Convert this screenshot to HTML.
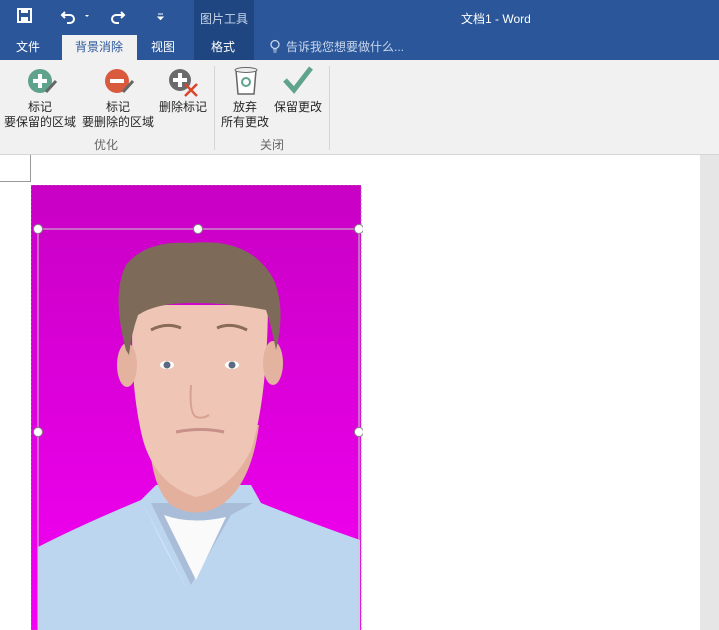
<!DOCTYPE html>
<html><head><meta charset="utf-8"><style>
body{margin:0;width:719px;height:630px;overflow:hidden;position:relative;background:#fff;font-family:"Liberation Sans","Noto Sans CJK SC",sans-serif;font-size:12px}
.abs{position:absolute}
#top{left:0;top:0;width:719px;height:60px;background:#2b579a}
#ribbon{left:0;top:60px;width:719px;height:94px;background:#f1f1f1;border-bottom:1px solid #d5d5d5}
.w{color:#fff}
.t{color:#262626;text-align:center;line-height:15px}
</style></head><body>
<div id="top" class="abs"></div>
<div class="abs" style="left:194px;top:0;width:60px;height:60px;background:#1f4680"></div>
<div class="abs" style="left:62px;top:35px;width:75px;height:25px;background:#f1f1f1"></div>
<svg class="abs" style="left:15px;top:6px" width="160" height="20">
<rect x="3" y="3" width="13" height="13" fill="none" stroke="#fff" stroke-width="2"/><rect x="6" y="3" width="7" height="4" fill="#fff"/><rect x="6" y="11" width="7" height="5" fill="#fff"/>
<path d="M50 6 L47 9 L50 12 M47 9 H55 A4 4 0 0 1 55 17 H52" fill="none" stroke="#fff" stroke-width="2"/>
<path d="M70 9 l2 2 l2 -2z" fill="#fff"/>
<path d="M106 6 L109 9 L106 12 M109 9 H101 A4 4 0 0 0 101 17 H104" fill="none" stroke="#fff" stroke-width="2"/>
<path d="M143 8 h5 M143 11 l2.5 2.5 l2.5 -2.5z" stroke="#fff" fill="#fff"/>
</svg>
<div class="abs w" style="left:200px;top:10px;font-size:12px;color:#c8d6ec">图片工具</div>
<div class="abs w" style="left:461px;top:10px;font-size:12px">文档1 - Word</div>
<div class="abs w" style="left:16px;top:38px">文件</div>
<div class="abs" style="left:75px;top:38px;color:#2b579a">背景消除</div>
<div class="abs w" style="left:151px;top:38px">视图</div>
<div class="abs w" style="left:211px;top:38px">格式</div>
<svg class="abs" style="left:269px;top:39px" width="12" height="15"><circle cx="6" cy="5.5" r="4" fill="none" stroke="#c8d6ec" stroke-width="1.3"/><path d="M4 11h4M4.5 13h3" stroke="#c8d6ec"/></svg>
<div class="abs" style="left:286px;top:38px;color:#c8d6ec">告诉我您想要做什么...</div>
<div id="ribbon" class="abs"></div>
<svg class="abs" style="left:0;top:62px" width="330" height="40">
<circle cx="40" cy="19" r="12" fill="#5fa38d"/><path d="M40 12v14M33 19h14" stroke="#fff" stroke-width="4"/><path d="M46 30 l10 -11" stroke="#666" stroke-width="3"/>
<circle cx="117" cy="19" r="12" fill="#d95a3c"/><path d="M110 19h14" stroke="#fff" stroke-width="4"/><path d="M123 30 l10 -11" stroke="#666" stroke-width="3"/>
<circle cx="180" cy="18" r="11" fill="#6b6b6b"/><path d="M180 11v14M173 18h14" stroke="#fff" stroke-width="4"/><path d="M185 22l12 12M197 22l-12 12" stroke="#d9472b" stroke-width="2.5"/>
<path d="M236 8h20l-2 24h-16z" fill="#fff" stroke="#666" stroke-width="1.5"/><ellipse cx="246" cy="8" rx="11" ry="2.5" fill="#eee" stroke="#666"/><circle cx="246" cy="20" r="4" fill="none" stroke="#5fa38d" stroke-width="2"/>
<path d="M285 18 l9 10 l17 -22" fill="none" stroke="#5fa38d" stroke-width="5"/>
</svg>
<div class="abs t" style="left:0;top:100px;width:80px">标记<br>要保留的区域</div>
<div class="abs t" style="left:80px;top:100px;width:76px">标记<br>要删除的区域</div>
<div class="abs t" style="left:157px;top:100px;width:52px">删除标记</div>
<div class="abs t" style="left:218px;top:100px;width:54px">放弃<br>所有更改</div>
<div class="abs t" style="left:272px;top:100px;width:52px">保留更改</div>
<div class="abs" style="left:94px;top:136px;color:#666">优化</div>
<div class="abs" style="left:260px;top:136px;color:#666">关闭</div>
<div class="abs" style="left:214px;top:66px;width:1px;height:84px;background:#d5d5d5"></div>
<div class="abs" style="left:329px;top:66px;width:1px;height:84px;background:#d5d5d5"></div>
<div class="abs" style="left:0;top:155px;width:30px;height:26px;border-right:1px solid #999;border-bottom:1px solid #999"></div>
<div class="abs" style="left:700px;top:155px;width:19px;height:475px;background:#e6e6e6"></div>
<svg class="abs" style="left:31px;top:185px" width="332" height="445">
<defs><linearGradient id="g" x1="0" y1="0" x2="0" y2="1"><stop offset="0" stop-color="#c800c4"/><stop offset="1" stop-color="#f400f4"/></linearGradient></defs>
<rect x="0" y="0" width="330" height="445" fill="url(#g)" stroke="#aa66aa" stroke-dasharray="2 2"/>
<path d="M7 445 V362 Q50 340 110 315 L125 300 H220 L230 318 Q280 338 329 355 V445z" fill="#bcd6f0"/>
<path d="M120 318 L160 400 L200 330 L222 318z" fill="#a9bdd8"/>
<path d="M133 330 Q160 340 195 332 L165 395z" fill="#fafafa"/>
<path d="M112 318 L160 412 L132 360z" fill="#d3e4f6"/>
<path d="M118 240 Q118 300 140 320 Q165 335 190 320 Q220 300 228 240z" fill="#e3b09e"/>
<path d="M102 120 Q98 200 112 255 Q125 300 165 312 Q200 305 220 265 Q236 215 237 120z" fill="#efc6b5"/>
<ellipse cx="96" cy="180" rx="10" ry="22" fill="#e3b3a0"/><ellipse cx="242" cy="178" rx="10" ry="22" fill="#e3b3a0"/>
<path d="M95 165 Q80 110 95 80 Q115 55 160 58 Q220 52 243 95 Q255 125 245 165 Q240 140 235 125 Q200 118 160 118 Q125 118 107 130 Q100 150 98 170z" fill="#7d6a58"/>
<path d="M120 145 Q135 137 150 143 M186 143 Q200 137 216 145" stroke="#8a6a58" stroke-width="3" fill="none"/>
<ellipse cx="136" cy="180" rx="7" ry="4" fill="#fff"/><ellipse cx="201" cy="180" rx="7" ry="4" fill="#fff"/>
<circle cx="136" cy="180" r="3.5" fill="#5a6a80"/><circle cx="201" cy="180" r="3.5" fill="#5a6a80"/>
<path d="M160 200 Q158 228 165 232 Q172 234 178 230" stroke="#d8a090" stroke-width="2" fill="none"/>
<path d="M145 247 Q170 242 193 247" stroke="#c8908a" stroke-width="3" fill="none"/>
<line x1="7" y1="44" x2="328" y2="44" stroke="#ccc"/>
<line x1="7" y1="44" x2="7" y2="445" stroke="#ccc"/><line x1="328" y1="44" x2="328" y2="445" stroke="#ccc"/>
<g fill="#fff" stroke="#888"><circle cx="7" cy="44" r="4.5"/><circle cx="167" cy="44" r="4.5"/><circle cx="328" cy="44" r="4.5"/><circle cx="7" cy="247" r="4.5"/><circle cx="328" cy="247" r="4.5"/></g>
</svg>
</body></html>
